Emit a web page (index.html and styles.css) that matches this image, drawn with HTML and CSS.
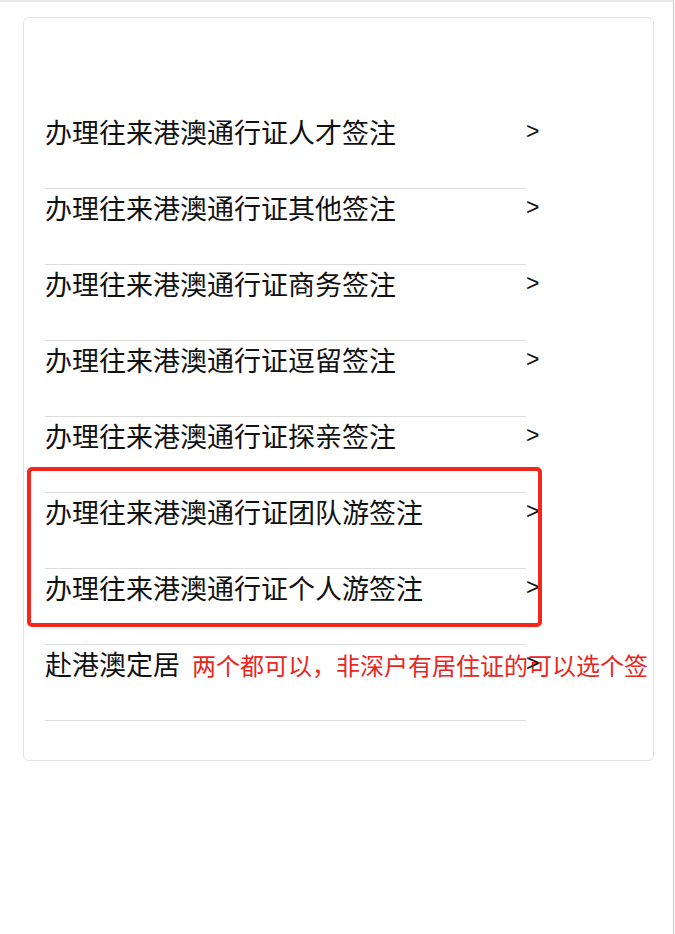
FILE: index.html
```html
<!DOCTYPE html>
<html lang="zh-CN">
<head>
<meta charset="utf-8">
<title>港澳通行证签注</title>
<link rel="stylesheet" href="styles.css">
</head>
<body>
<div class="page">
  <div class="card">
    <ul class="list">
      <li class="row"><span class="label">办理往来港澳通行证人才签注</span><span class="arrow">&gt;</span></li>
      <li class="row"><span class="label">办理往来港澳通行证其他签注</span><span class="arrow">&gt;</span></li>
      <li class="row"><span class="label">办理往来港澳通行证商务签注</span><span class="arrow">&gt;</span></li>
      <li class="row"><span class="label">办理往来港澳通行证逗留签注</span><span class="arrow">&gt;</span></li>
      <li class="row"><span class="label">办理往来港澳通行证探亲签注</span><span class="arrow">&gt;</span></li>
      <li class="row"><span class="label">办理往来港澳通行证团队游签注</span><span class="arrow">&gt;</span></li>
      <li class="row"><span class="label">办理往来港澳通行证个人游签注</span><span class="arrow">&gt;</span></li>
      <li class="row"><span class="label">赴港澳定居<span class="note">两个都可以，非深户有居住证的可以选个签</span></span><span class="arrow">&gt;</span></li>
    </ul>
  </div>
  <div class="highlight"></div>
</div>
</body>
</html>
```

FILE: styles.css
```css
html, body {
  margin: 0;
  padding: 0;
  background: #ffffff;
}

body {
  font-family: "Noto Sans CJK SC", "Noto Sans", sans-serif;
  color: #111111;
}

.page {
  position: relative;
  box-sizing: border-box;
  width: 674px;
  min-height: 934px;
  border-top: 2px solid #e9e9e9;
  border-right: 1px solid #c9c9c9;
  padding: 15px 0 0 23px;
}

.card {
  box-sizing: border-box;
  width: 631px;
  height: 744px;
  border: 1px solid #e2e2e2;
  border-radius: 6px;
  padding: 95px 0 0 21px;
}

.list {
  list-style: none;
  margin: 0;
  padding: 0;
  width: 481px;
}

.row {
  position: relative;
  height: 75px;
  border-bottom: 1px solid #dcdcdc;
  font-size: 27px;
  line-height: 37px;
  white-space: nowrap;
}

.label {
  display: block;
}

.note {
  font-size: 24px;
  color: #e8261e;
  margin-left: 12px;
}

.arrow {
  position: absolute;
  left: 481px;
  top: 0;
  font-family: "Liberation Sans", Arial, sans-serif;
  font-size: 23px;
  line-height: 37px;
  color: #111111;
}

.highlight {
  position: absolute;
  left: 27px;
  top: 465px;
  width: 515px;
  height: 160px;
  box-sizing: border-box;
  border: 4px solid #f5271c;
  border-radius: 5px;
}
```
